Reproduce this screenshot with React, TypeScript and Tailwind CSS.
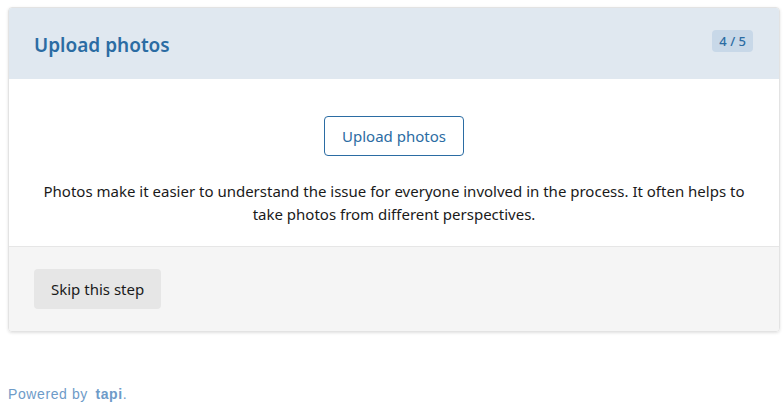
export default function App() {
  return (
    <div className="min-h-screen bg-white pl-2 pr-[4px] pt-[7px] font-['Noto_Sans',sans-serif]">
      <div className="rounded border border-[#e3e3e3] shadow-[0_1px_3px_rgba(0,0,0,0.12)] overflow-hidden">
        <div className="bg-[#e0e8f0] h-[71px] flex items-start justify-between pl-[25px] pr-[26px] pt-[21px]">
          <h1 className="text-[19px] font-semibold text-[#2b6ca3] leading-[30px] mt-[1px]">Upload photos</h1>
          <span className="mt-[1px] bg-[#c8d8e8] text-[#2b6ca3] text-[13px] font-medium rounded px-[7px] h-[22px] leading-[22px]">4 / 5</span>
        </div>
        <div className="bg-white border-b border-[#e6e6e6] flex flex-col items-center pt-[37px] pb-[20px] px-[30px]">
          <button className="w-[140px] h-[40px] rounded border border-[#2b6ca3] text-[#2b6ca3] text-[15px]">Upload photos</button>
          <p className="mt-[24px] text-[15px] leading-[23px] text-[#1a1a1a] text-center">Photos make it easier to understand the issue for everyone involved in the process. It often helps to take photos from different perspectives.</p>
        </div>
        <div className="bg-[#f5f5f5] px-[25px] pt-[22px] pb-[22px]">
          <button className="h-[40px] px-[17px] rounded bg-[#e6e6e6] text-[15px] text-[#1a1a1a]">Skip this step</button>
        </div>
      </div>
      <div className="mt-[52px] font-['Liberation_Sans',sans-serif] text-[14px] text-[#6e9bc8] tracking-[0.6px]">
        Powered by <span className="font-bold ml-[3px]">tapi</span>.
      </div>
    </div>
  )
}
